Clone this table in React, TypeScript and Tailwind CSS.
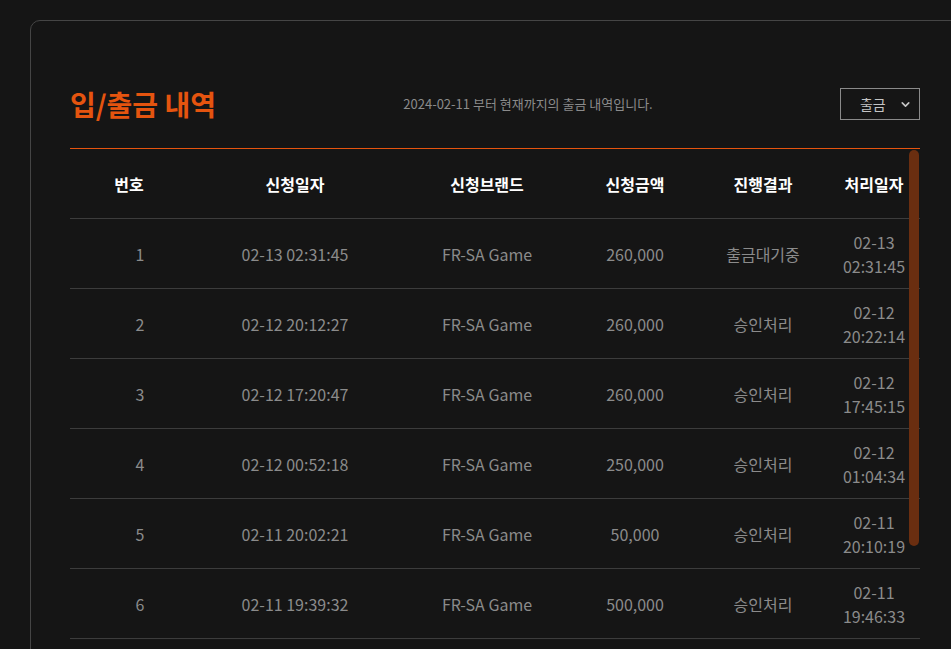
import { ChevronDown } from "lucide-react"

interface Row {
  no: number
  reqDate: string
  brand: string
  amount: string
  status: string
  doneDate: string
  doneTime: string
}

const rows: Row[] = [
  { no: 1, reqDate: "02-13 02:31:45", brand: "FR-SA Game", amount: "260,000", status: "출금대기중", doneDate: "02-13", doneTime: "02:31:45" },
  { no: 2, reqDate: "02-12 20:12:27", brand: "FR-SA Game", amount: "260,000", status: "승인처리", doneDate: "02-12", doneTime: "20:22:14" },
  { no: 3, reqDate: "02-12 17:20:47", brand: "FR-SA Game", amount: "260,000", status: "승인처리", doneDate: "02-12", doneTime: "17:45:15" },
  { no: 4, reqDate: "02-12 00:52:18", brand: "FR-SA Game", amount: "250,000", status: "승인처리", doneDate: "02-12", doneTime: "01:04:34" },
  { no: 5, reqDate: "02-11 20:02:21", brand: "FR-SA Game", amount: "50,000", status: "승인처리", doneDate: "02-11", doneTime: "20:10:19" },
  { no: 6, reqDate: "02-11 19:39:32", brand: "FR-SA Game", amount: "500,000", status: "승인처리", doneDate: "02-11", doneTime: "19:46:33" },
]

const cols = "grid grid-cols-[118px_214px_170px_126px_130px_92px]"

export default function App() {
  return (
    <div
      className="h-[649px] w-[951px] overflow-hidden bg-[#151515] pl-[30px] pt-[20px]"
      style={{ fontFamily: '"Noto Sans CJK KR", "Noto Sans", sans-serif' }}
    >
      <div className="h-[700px] w-[940px] rounded-tl-[10px] border border-[#454545] bg-[#151515] pl-[39px] pt-[55px]">
        {/* 제목 줄 */}
        <div className="flex h-[56px] w-[850px] items-center justify-between">
          <h1 className="text-[28px] font-bold leading-none text-[#e5540f]">입/출금 내역</h1>
          <p className="text-[13px] text-[#8b8b8b]">2024-02-11 부터 현재까지의 출금 내역입니다.</p>
          <div className="flex h-[32px] w-[80px] items-center justify-between border border-[#8a8a8a] pl-[19px] pr-[7px] text-[14px] text-[#c4c4c4]">
            <span>출금</span>
            <ChevronDown className="h-[13px] w-[13px]" strokeWidth={3} />
          </div>
        </div>

        {/* 표 */}
        <div className="relative mt-[16px] w-[850px] border-t border-[#e5540f]">
          <div className={`${cols} h-[70px] items-center border-b border-[#3c3c3c] text-center text-[16px] font-bold text-white`}>
            <div>번호</div>
            <div>신청일자</div>
            <div>신청브랜드</div>
            <div>신청금액</div>
            <div>진행결과</div>
            <div>처리일자</div>
          </div>
          {rows.map((r) => (
            <div
              key={r.no}
              className={`${cols} h-[70px] items-center border-b border-[#3c3c3c] text-center text-[16px] leading-[24px] text-[#8b8b8b]`}
            >
              <div className="pl-[22px]">{r.no}</div>
              <div>{r.reqDate}</div>
              <div>{r.brand}</div>
              <div>{r.amount}</div>
              <div>{r.status}</div>
              <div>
                <div>{r.doneDate}</div>
                <div>{r.doneTime}</div>
              </div>
            </div>
          ))}

          {/* 스크롤바 */}
          <div className="absolute right-[1px] top-[1px] h-[396px] w-[10px] rounded-full bg-[#6a2e10]" />
        </div>
      </div>
    </div>
  )
}
